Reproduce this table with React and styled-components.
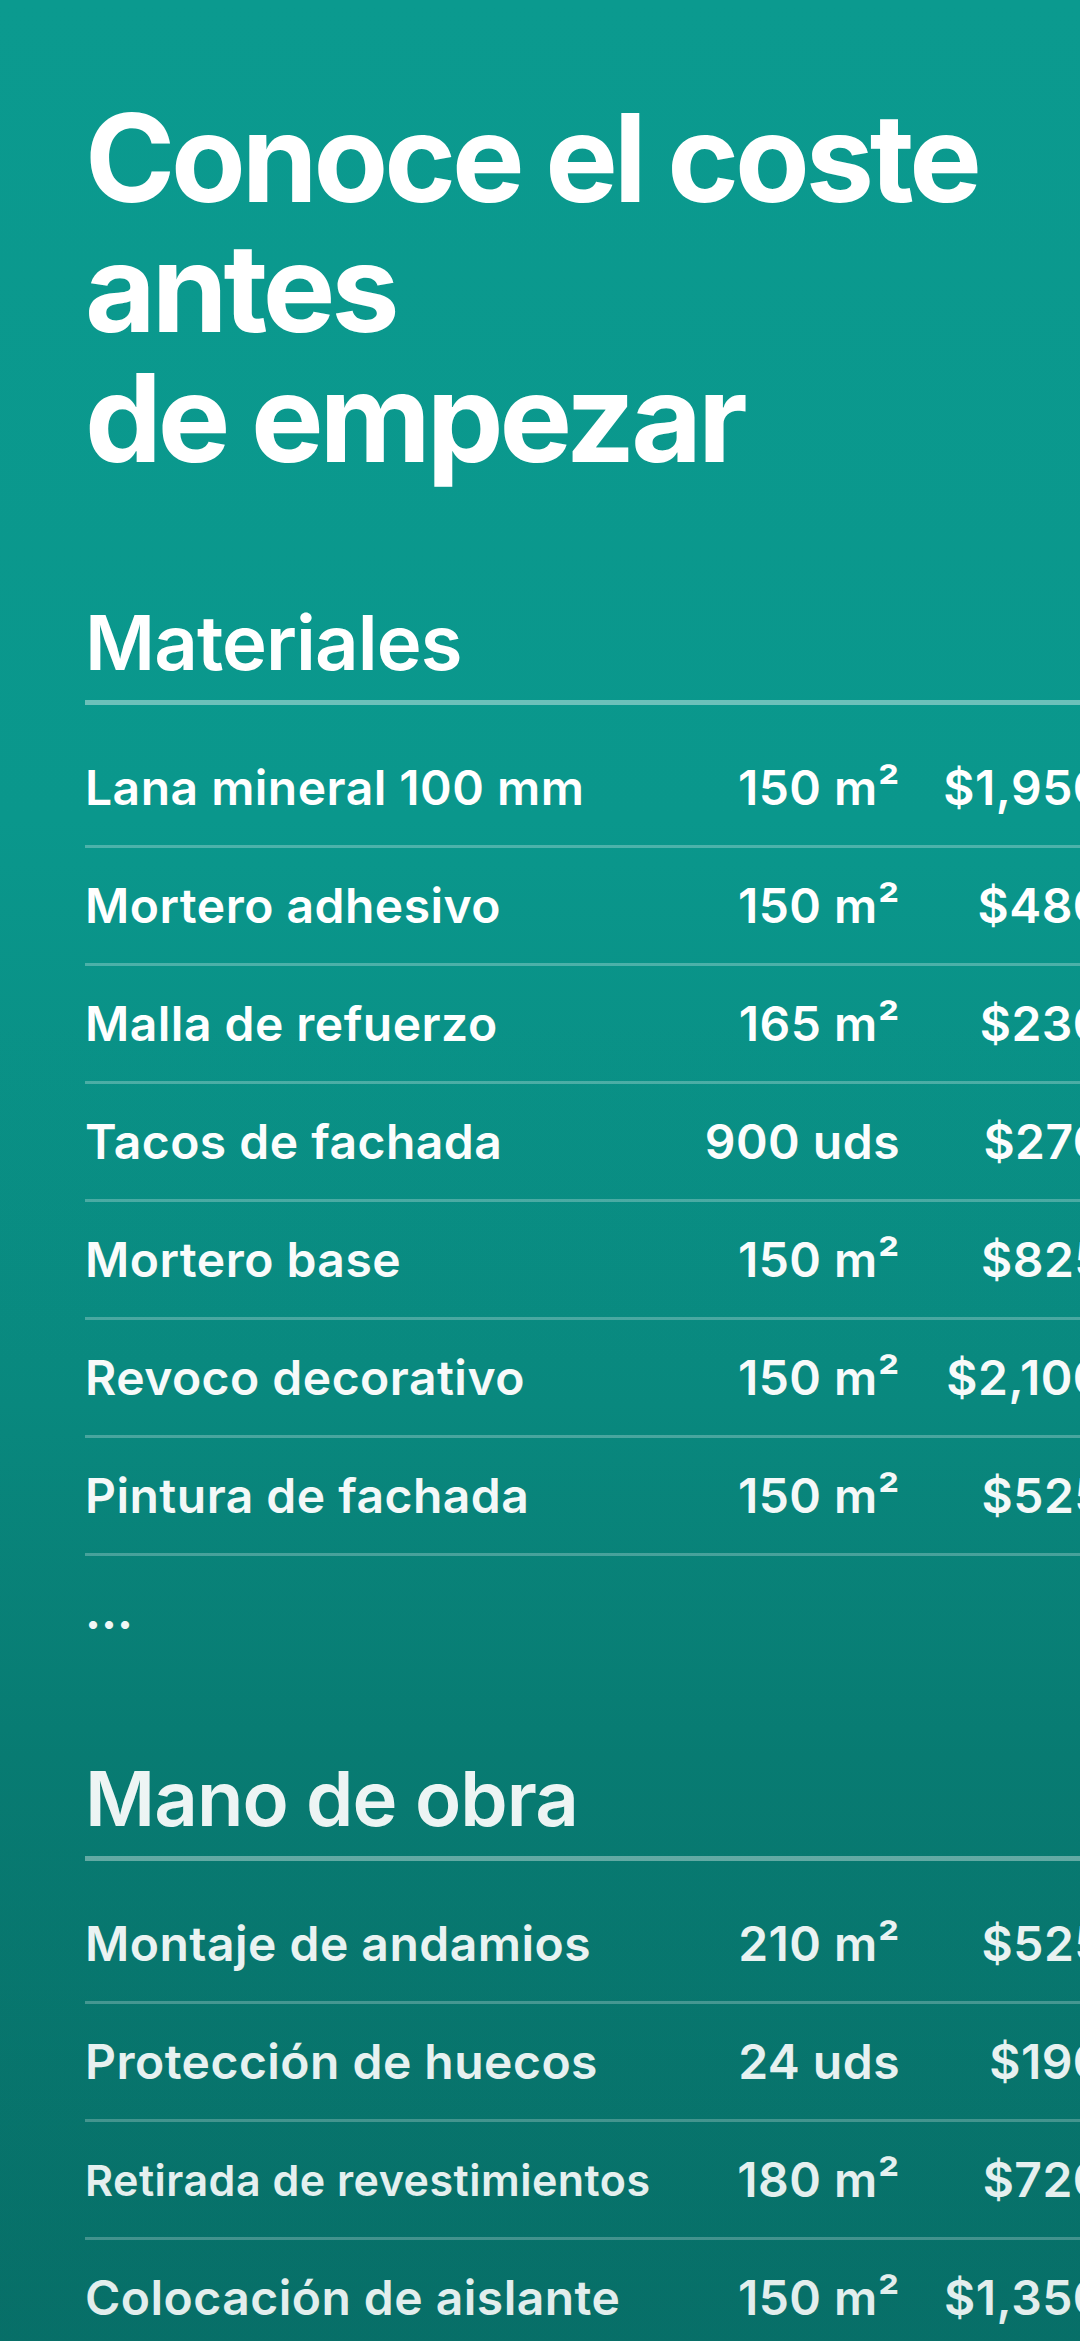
import React from "react";
import styled, { createGlobalStyle } from "styled-components";

const GlobalStyle = createGlobalStyle`
  html, body {
    margin: 0;
    padding: 0;
    background: #076c65;
  }
  body {
    font-family: Inter, "Noto Sans", "Liberation Sans", sans-serif;
    -webkit-font-smoothing: antialiased;
  }
`;

const materiales = [
  { name: "Lana mineral 100 mm", qty: "150 m²", price: "$1,950" },
  { name: "Mortero adhesivo", qty: "150 m²", price: "$480" },
  { name: "Malla de refuerzo", qty: "165 m²", price: "$230" },
  { name: "Tacos de fachada", qty: "900 uds", price: "$270" },
  { name: "Mortero base", qty: "150 m²", price: "$825" },
  { name: "Revoco decorativo", qty: "150 m²", price: "$2,100" },
  { name: "Pintura de fachada", qty: "150 m²", price: "$525" },
];

const manoDeObra = [
  { name: "Montaje de andamios", qty: "210 m²", price: "$525" },
  { name: "Protección de huecos", qty: "24 uds", price: "$190" },
  { name: "Retirada de revestimientos", qty: "180 m²", price: "$720", small: true },
  { name: "Colocación de aislante", qty: "150 m²", price: "$1,350" },
];

function CostList({ items }) {
  return (
    <List>
      {items.map((item) => (
        <Row key={item.name}>
          <Name $small={item.small}>{item.name}</Name>
          <Qty>{item.qty}</Qty>
          <Price>{item.price}</Price>
        </Row>
      ))}
    </List>
  );
}

export default function App() {
  return (
    <>
      <GlobalStyle />
      <Page>
        <Title>
          Conoce el coste
          <br />
          antes
          <br />
          de empezar
        </Title>

        <Section>
          <SectionTitle>Materiales</SectionTitle>
          <CostList items={materiales} />
          <More>...</More>
        </Section>

        <Section $gap={112}>
          <SectionTitle>Mano de obra</SectionTitle>
          <CostList items={manoDeObra} />
        </Section>
        <Fade />
      </Page>
    </>
  );
}

const Page = styled.main`
  position: relative;
  width: 1080px;
  height: 2341px;
  overflow: hidden;
  box-sizing: border-box;
  padding: 93px 0 0 85px;
  color: #ffffff;
  background: linear-gradient(
    180deg,
    #0b9a8f 0%,
    #0a978c 35%,
    #09897f 60%,
    #087c73 75%,
    #076f68 100%
  );
`;

// darkening fade over the lower part of the page
const Fade = styled.div`
  position: absolute;
  inset: 0;
  pointer-events: none;
  background: linear-gradient(
    180deg,
    rgba(8, 110, 102, 0) 0%,
    rgba(8, 110, 102, 0) 42%,
    rgba(8, 110, 102, 0.12) 100%
  );
`;

const Title = styled.h1`
  margin: 0;
  font-size: 122px;
  line-height: 130px;
  font-weight: 700;
  letter-spacing: -0.034em;
`;

const Section = styled.section`
  margin-top: ${(p) => p.$gap || 114}px;
  width: 1020px;
`;

const SectionTitle = styled.h2`
  margin: 0;
  padding-bottom: 12px;
  font-size: 76px;
  line-height: 91px;
  font-weight: 600;
  letter-spacing: -0.012em;
  border-bottom: 5px solid rgba(255, 255, 255, 0.4);
`;

const List = styled.div`
  padding-top: 25px;
`;

const Row = styled.div`
  display: grid;
  grid-template-columns: 1fr auto 205px;
  align-items: center;
  height: 115px;
  border-bottom: 3px solid rgba(255, 255, 255, 0.27);
  font-size: 48px;
  font-weight: 600;
  letter-spacing: 0.01em;
`;

const Name = styled.span`
  font-size: ${(p) => (p.$small ? "43px" : "48px")};
  white-space: nowrap;
`;

const Qty = styled.span`
  text-align: right;
  white-space: nowrap;
`;

const Price = styled.span`
  text-align: right;
  white-space: nowrap;
`;

const More = styled.div`
  padding-top: 27px;
  font-size: 48px;
  font-weight: 700;
  line-height: 58px;
`;
